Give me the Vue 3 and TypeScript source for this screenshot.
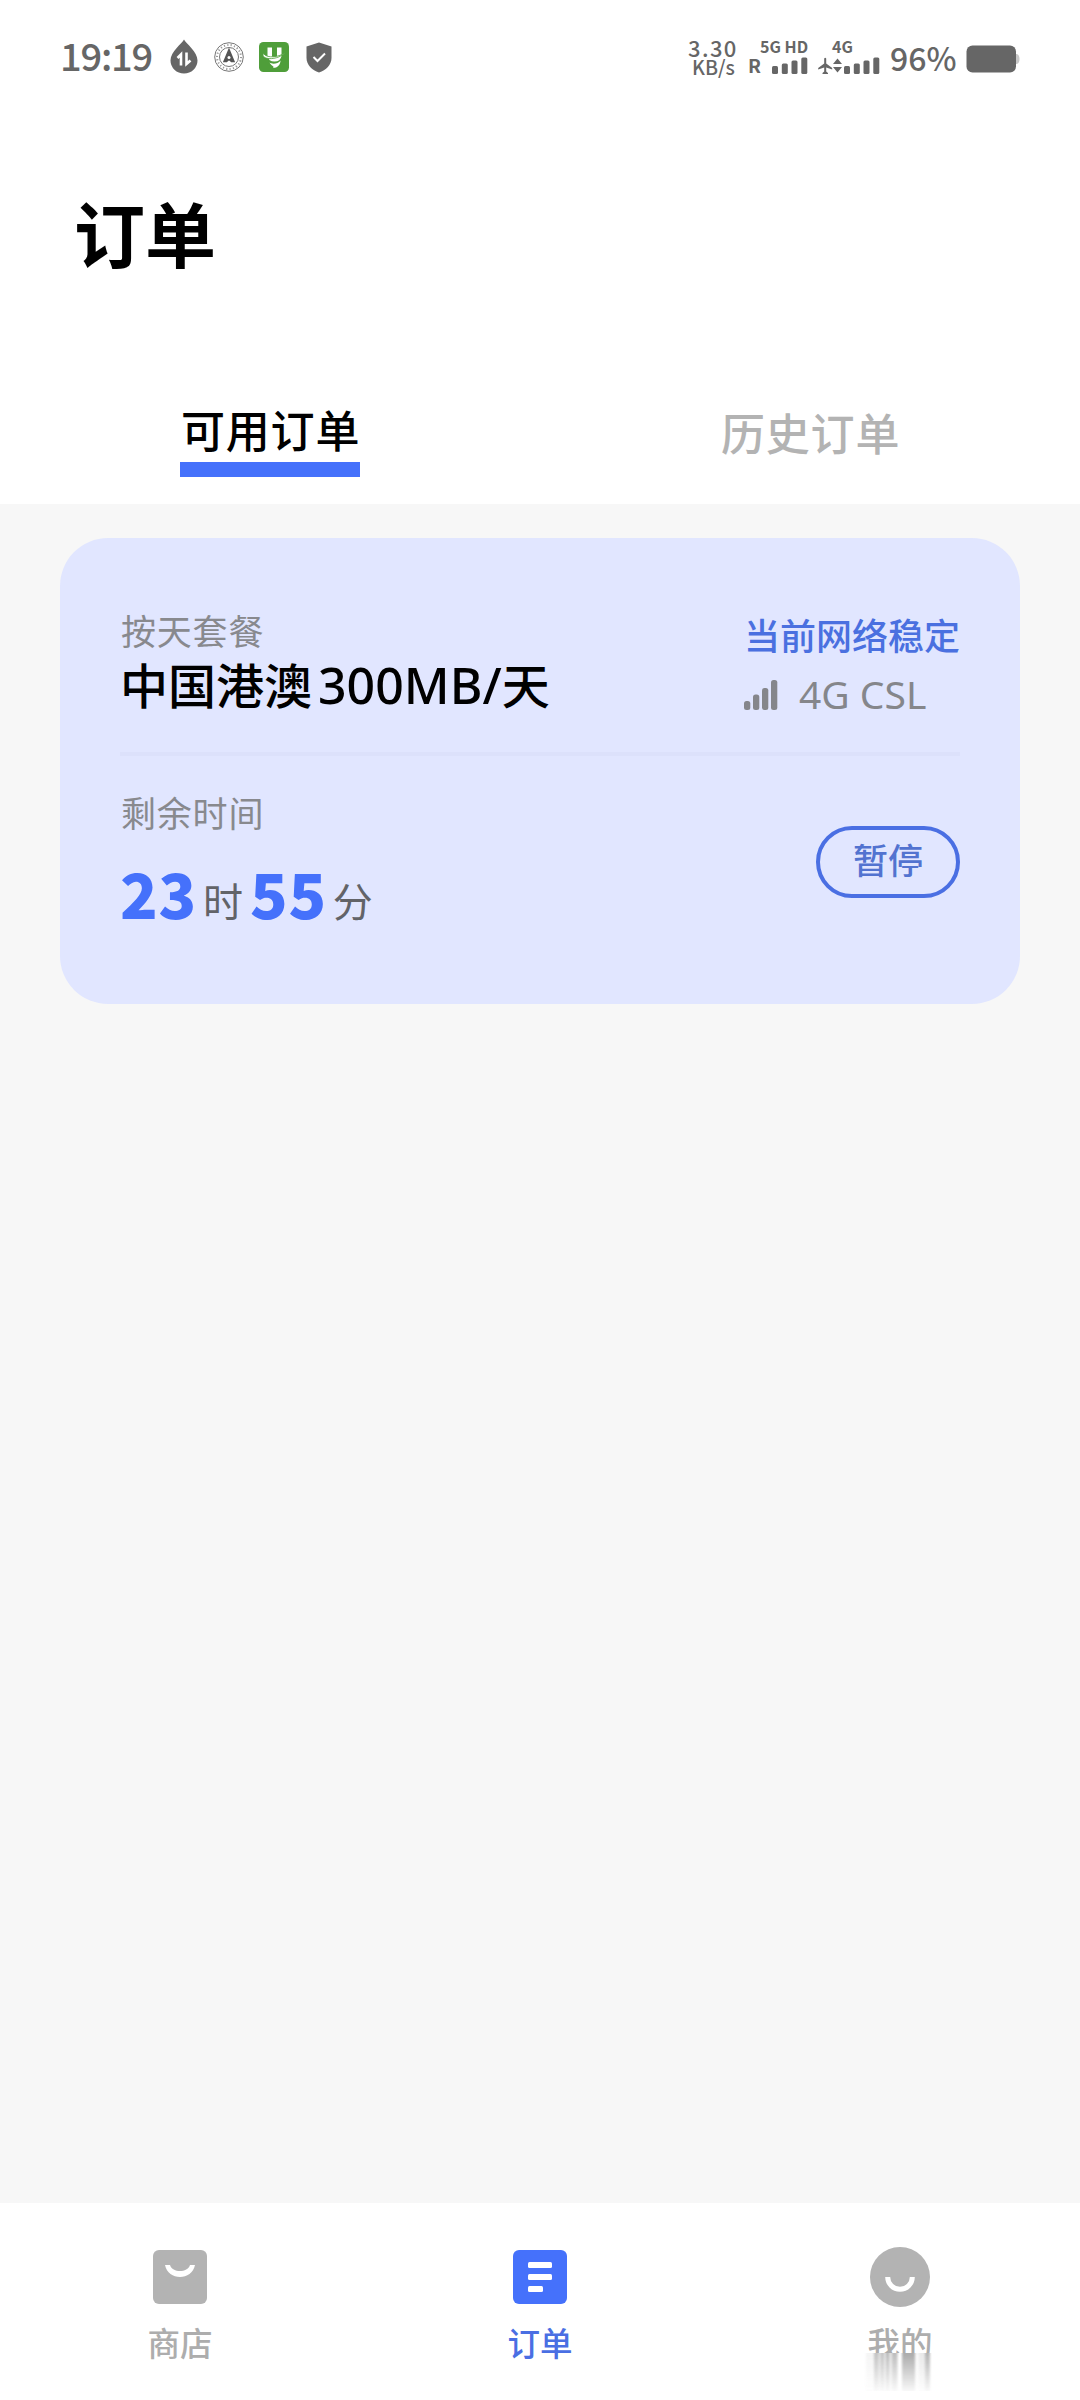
<script setup lang="ts">
import { ref } from 'vue'

type TabKey = 'active' | 'history'

const tabs: { key: TabKey; label: string }[] = [
  { key: 'active', label: '可用订单' },
  { key: 'history', label: '历史订单' },
]
const current = ref<TabKey>('active')

const order = {
  type: '按天套餐',
  region: '中国港澳',
  quota: '300MB/',
  unit: '天',
  status: '当前网络稳定',
  carrier: '4G CSL',
  hours: 23,
  minutes: 55,
}

// Fading streaks below the last navigation label: x, width, opacity
const streaks: [number, number, number][] = [
  [4, 8, 0.12], [12, 4.5, 0.7], [16.5, 2, 0.35], [18.5, 3.5, 0.7], [22, 2, 0.3],
  [24, 3.5, 0.8], [28, 2, 0.3], [30, 5.5, 0.75], [40, 13, 0.95], [53, 4, 0.08],
  [57, 6, 0.25], [63, 5, 0.85],
]
</script>

<template>
  <div class="screen">
    <header class="head">
      <div class="status">
        <div class="status-left">
          <span class="clock">19:19</span>
          <svg class="drop" width="28" height="36" viewBox="0 0 28 36">
            <path d="M14 0.5C16 4.5 27.5 12.500 27.500 21.500A13.500 13 0 0 1 0.500 21.500C0.500 12.500 12 4.500 14 0.500Z" fill="#666" />
            <path d="M7.500 19L11 15.500V26.500M16.500 13.500V25L20.500 21.500" fill="none" stroke="#fff" stroke-width="2.600" />
          </svg>
          <svg class="seal" width="30" height="30" viewBox="0 0 30 30" fill="none" stroke="#777">
            <circle cx="15" cy="15" r="14.300" stroke-width="1" />
            <circle cx="15" cy="15" r="12" stroke-width="2" stroke-dasharray="1.200 2.200" stroke="#999" />
            <circle cx="15" cy="15" r="9.500" stroke-width="1" />
            <path d="M15 7.500L20 19.500H17.500L15 17.500L12.500 19.500H10Z" fill="#555" stroke="#555" stroke-width="1.500" />
            <circle cx="15" cy="15.500" r="1.500" fill="#fff" stroke="none" />
          </svg>
          <svg class="green" width="30" height="30" viewBox="0 0 30 30">
            <rect width="30" height="30" rx="4.500" fill="#4f9e3a" />
            <path d="M8.500 5.500H13V14.500Q15.500 17 18 14.500V5.500H22.500V14Q21.500 19.500 15.500 19.500Q9.500 19.500 8.500 14Z" fill="#fff" />
            <path d="M4.500 11.500C1 18 19 19 26 10.500C21 15 8 17 4.500 11.500Z" fill="#fff" stroke="#4f9e3a" stroke-width="0.800" />
            <path d="M10.500 20.500C13 22.500 19 22 21.500 18.500C21.500 22.500 18.500 26 14 26C16 24.500 12.500 24 10.500 20.500Z" fill="#fff" />
          </svg>
          <svg class="shield" width="26" height="31" viewBox="0 0 26 31">
            <path d="M13 0.500L25.500 4.500V16C25.500 23 20 28 13 30.500C6 28 0.500 23 0.500 16V4.500Z" fill="#666" />
            <path d="M7.500 15L11.500 19L19 11.500" fill="none" stroke="#fff" stroke-width="2" />
          </svg>
        </div>
        <div class="status-right">
          <div class="speed">
            <span class="rate">3.30</span>
            <span class="kbs">KB/s</span>
          </div>
          <div class="sim sim1">
            <span class="net">5G HD</span>
            <div class="sim-row">
              <span class="roam">R</span>
              <svg width="36" height="17" viewBox="0 0 36 17" fill="#666">
                <rect x="0" y="9" width="6" height="8" rx="1.500" />
                <rect x="9.800" y="6.500" width="6" height="10.500" rx="1.500" />
                <rect x="19.500" y="3.500" width="6" height="13.500" rx="1.500" />
                <rect x="29.300" y="0.500" width="6" height="16.500" rx="1.500" />
              </svg>
            </div>
          </div>
          <div class="sim sim2">
            <span class="net">4G</span>
            <svg width="62" height="17" viewBox="0 0 62 17" fill="#666">
              <path d="M6.200 1.500Q7.200 0 8.200 1.500V6.500L14.200 11V12.500L8.200 10.500V14.500L10 16V17H4.500V16L6.200 14.500V10.500L0.200 12.500V11L6.200 6.500Z" />
              <path d="M15 7L19.500 1.500L24 7ZM15 10L19.500 15.500L24 10Z" />
              <rect x="26" y="9" width="6" height="8" rx="1.500" />
              <rect x="35.800" y="6.500" width="6" height="10.500" rx="1.500" />
              <rect x="45.500" y="3.500" width="6" height="13.500" rx="1.500" />
              <rect x="55.300" y="0.500" width="6" height="16.500" rx="1.500" />
            </svg>
          </div>
          <span class="percent">96%</span>
          <svg class="battery" width="54" height="28" viewBox="0 0 54 28">
            <path d="M48 9H51Q53.500 10 53.500 14T51 19H48Z" fill="#c8c8c8" />
            <rect x="0.500" y="0.500" width="49.500" height="27" rx="6" fill="#666" />
          </svg>
        </div>
      </div>
      <h1 class="title">订单</h1>
      <div class="tabs">
        <button
          v-for="tab in tabs"
          :key="tab.key"
          class="tab"
          :class="{ on: tab.key === current }"
          @click="current = tab.key"
        >
          <span>{{ tab.label }}</span>
        </button>
      </div>
    </header>

    <main class="body">
      <section class="card">
        <div class="plan">
          <div class="plan-left">
            <div class="caption">{{ order.type }}</div>
            <div class="name">{{ order.region }}<span class="quota">{{ order.quota }}</span>{{ order.unit }}</div>
          </div>
          <div class="plan-right">
            <div class="net-state">{{ order.status }}</div>
            <div class="carrier">
              <svg width="34" height="30" viewBox="0 0 34 30" fill="#85868b">
                <rect x="0" y="21" width="6.300" height="9" rx="2.500" />
                <rect x="9" y="14.500" width="6.300" height="15.500" rx="2.500" />
                <rect x="18" y="8" width="6.300" height="22" rx="2.500" />
                <rect x="27" y="0" width="6.300" height="30" rx="2.500" />
              </svg>
              <span>{{ order.carrier }}</span>
            </div>
          </div>
        </div>
        <div class="divider"></div>
        <div class="remain">
          <div>
            <div class="caption">剩余时间</div>
            <div class="time"><b>{{ order.hours }}</b><i>时</i><b>{{ order.minutes }}</b><i>分</i></div>
          </div>
          <button class="pause">暂停</button>
        </div>
      </section>
    </main>

    <nav class="nav">
      <a class="item">
        <svg width="60" height="60" viewBox="0 0 60 60">
          <rect x="3" y="3" width="54" height="54" rx="6" fill="#b3b3b3" />
          <path d="M15 18H20C22.500 26 37.500 26 40 18H45C42 34 18 34 15 18Z" fill="#fff" />
        </svg>
        <span>商店</span>
      </a>
      <a class="item on">
        <svg width="60" height="60" viewBox="0 0 60 60">
          <rect x="3" y="3" width="54" height="54" rx="6" fill="#4571fb" />
          <g fill="#fff">
            <rect x="18" y="15" width="24" height="6" rx="1.500" />
            <rect x="18" y="27" width="24" height="6" rx="1.500" />
            <rect x="18" y="39" width="15" height="6" rx="1.500" />
          </g>
        </svg>
        <span>订单</span>
      </a>
      <a class="item">
        <svg width="60" height="60" viewBox="0 0 60 60">
          <circle cx="30" cy="30" r="30" fill="#b3b3b3" />
          <path d="M17.700 30A12.300 12.300 0 0 0 42.300 30" fill="none" stroke="#fff" stroke-width="5" />
        </svg>
        <span>我的</span>
        <svg class="fade" width="76" height="47" viewBox="0 0 76 47">
          <defs>
            <linearGradient id="fadeDown" x1="0" y1="0" x2="0" y2="1">
              <stop offset="0" stop-color="#a6a6a6" />
              <stop offset="1" stop-color="#a6a6a6" stop-opacity="0.080" />
            </linearGradient>
            <filter id="soften" x="-0.1" y="0" width="1.2" height="1">
              <feGaussianBlur stdDeviation="1 0" />
            </filter>
          </defs>
          <rect width="76" height="47" fill="#fff" />
          <g filter="url(#soften)">
            <rect
              v-for="s in streaks"
              :key="s[0]"
              :x="s[0]"
              y="0"
              :width="s[1]"
              height="38"
              :opacity="s[2]"
              fill="url(#fadeDown)"
            />
          </g>
        </svg>
      </a>
    </nav>
  </div>
</template>

<style>
body {
  margin: 0;
}
</style>

<style scoped>
.screen {
  width: 1080px;
  height: 2400px;
  display: flex;
  flex-direction: column;
  overflow: hidden;
  background: #f7f7f7;
  font-family: 'Noto Sans CJK SC', sans-serif;
  font-weight: 400;
}
.screen svg {
  display: block;
  flex: none;
}
button {
  padding: 0;
  border: 0;
  background: none;
  font: inherit;
}
.head {
  height: 504px;
  background: #fff;
  display: flex;
  flex-direction: column;
}
.status {
  height: 114px;
  display: flex;
  justify-content: space-between;
  padding: 0 60px;
  color: #666;
  font-weight: 500;
}
.status-left,
.status-right {
  display: flex;
  align-items: center;
  height: 114px;
}
.clock {
  width: 110px;
  font-size: 38px;
  letter-spacing: -1.2px;
  line-height: 60px;
  margin-bottom: 5px;
  white-space: nowrap;
}
.drop {
  margin-top: -1px;
}
.seal {
  margin-left: 16px;
}
.green {
  margin-left: 15px;
}
.shield {
  margin-left: 17px;
}
.speed {
  width: 60px;
  display: flex;
  flex-direction: column;
  align-items: flex-start;
}
.rate {
  font-size: 22px;
  line-height: 20px;
  letter-spacing: 1.4px;
}
.kbs {
  margin-left: 4px;
  font-size: 19.5px;
  line-height: 20px;
}
.sim {
  display: flex;
  flex-direction: column;
  white-space: nowrap;
}
.sim1 {
  width: 70px;
}
.sim2 {
  width: 72px;
}
.net {
  height: 16px;
  font-size: 16px;
  font-weight: 700;
  line-height: 11px;
  margin-left: 12px;
}
.sim2 .net {
  margin-left: 14px;
}
.sim-row {
  display: flex;
  height: 17px;
}
.roam {
  width: 24px;
  font-size: 19px;
  font-weight: 700;
  line-height: 15px;
}
.percent {
  width: 76px;
  font-size: 32px;
  line-height: 40px;
}
.battery {
  margin-top: 3px;
}
.title {
  margin: 67px 0 0 74px;
  font-size: 71px;
  font-weight: 700;
  line-height: 100px;
  color: #000;
}
.tabs {
  margin-top: 105px;
  display: flex;
}
.tab {
  flex: 1;
  display: flex;
  justify-content: center;
  align-items: flex-start;
  color: #b3b3b3;
  font-size: 44px;
  font-weight: 500;
  letter-spacing: 0.8px;
}
.tab span {
  width: 180px;
  height: 76px;
  line-height: 92px;
  text-indent: 1px;
  white-space: nowrap;
}
.tab.on span {
  line-height: 86px;
  border-bottom: 15px solid #4571fb;
  color: #000;
}
.body {
  flex: 1;
  padding: 34px 60px 0;
}
.card {
  box-sizing: border-box;
  height: 466px;
  padding: 0 60px;
  border-radius: 48px;
  background: #e1e6ff;
}
.plan {
  height: 214px;
  display: flex;
  justify-content: space-between;
}
.plan-left {
  padding-top: 67px;
}
.caption {
  font-size: 35px;
  letter-spacing: 0.8px;
  line-height: 50px;
  text-indent: 1px;
  color: #88898e;
}
.name {
  font-size: 48px;
  font-weight: 500;
  line-height: 56px;
  color: #000;
  white-space: nowrap;
}
.quota {
  margin-left: 6px;
  font-family: 'Noto Sans', sans-serif;
  font-size: 50px;
  line-height: 50px;
}
.plan-right {
  width: 216px;
  padding-top: 70px;
}
.net-state {
  font-size: 36px;
  font-weight: 500;
  line-height: 52px;
  color: #4a70e0;
  white-space: nowrap;
}
.carrier {
  margin-top: 9px;
  height: 52px;
  display: flex;
  align-items: center;
  gap: 21px;
  color: #85868b;
  font-family: 'Noto Sans', sans-serif;
  font-size: 39px;
  line-height: 52px;
  white-space: nowrap;
}
.carrier span {
  margin-top: -2px;
}
.divider {
  height: 4px;
  background: #dce1fb;
}
.remain {
  display: flex;
  justify-content: space-between;
  padding-top: 31px;
}
.time {
  display: flex;
  align-items: flex-end;
  margin-top: 10px;
}
.time b {
  font-size: 62px;
  font-weight: 900;
  line-height: 90px;
  letter-spacing: 0.7px;
  color: #4571fb;
}
.time i {
  margin: 0 7px 0 6px;
  font-style: normal;
  font-weight: 400;
  font-size: 40px;
  line-height: 74px;
  color: #626368;
}
.pause {
  box-sizing: border-box;
  width: 144px;
  height: 72px;
  margin-top: 39px;
  padding-bottom: 6px;
  border: 4.5px solid #4a6fe3;
  border-radius: 36px;
  color: #5273d0;
  font-size: 35px;
  font-weight: 500;
  line-height: 56px;
}
.nav {
  height: 197px;
  display: flex;
  background: #fff;
}
.item {
  flex: 1;
  position: relative;
  display: flex;
  flex-direction: column;
  align-items: center;
  padding-top: 44px;
  color: #adadad;
}
.item span {
  margin-top: 11px;
  font-size: 32.5px;
  font-weight: 500;
  line-height: 47px;
}
.item.on {
  color: #4a6fe3;
}
.fade {
  position: absolute;
  left: 142px;
  top: 150px;
}
</style>
